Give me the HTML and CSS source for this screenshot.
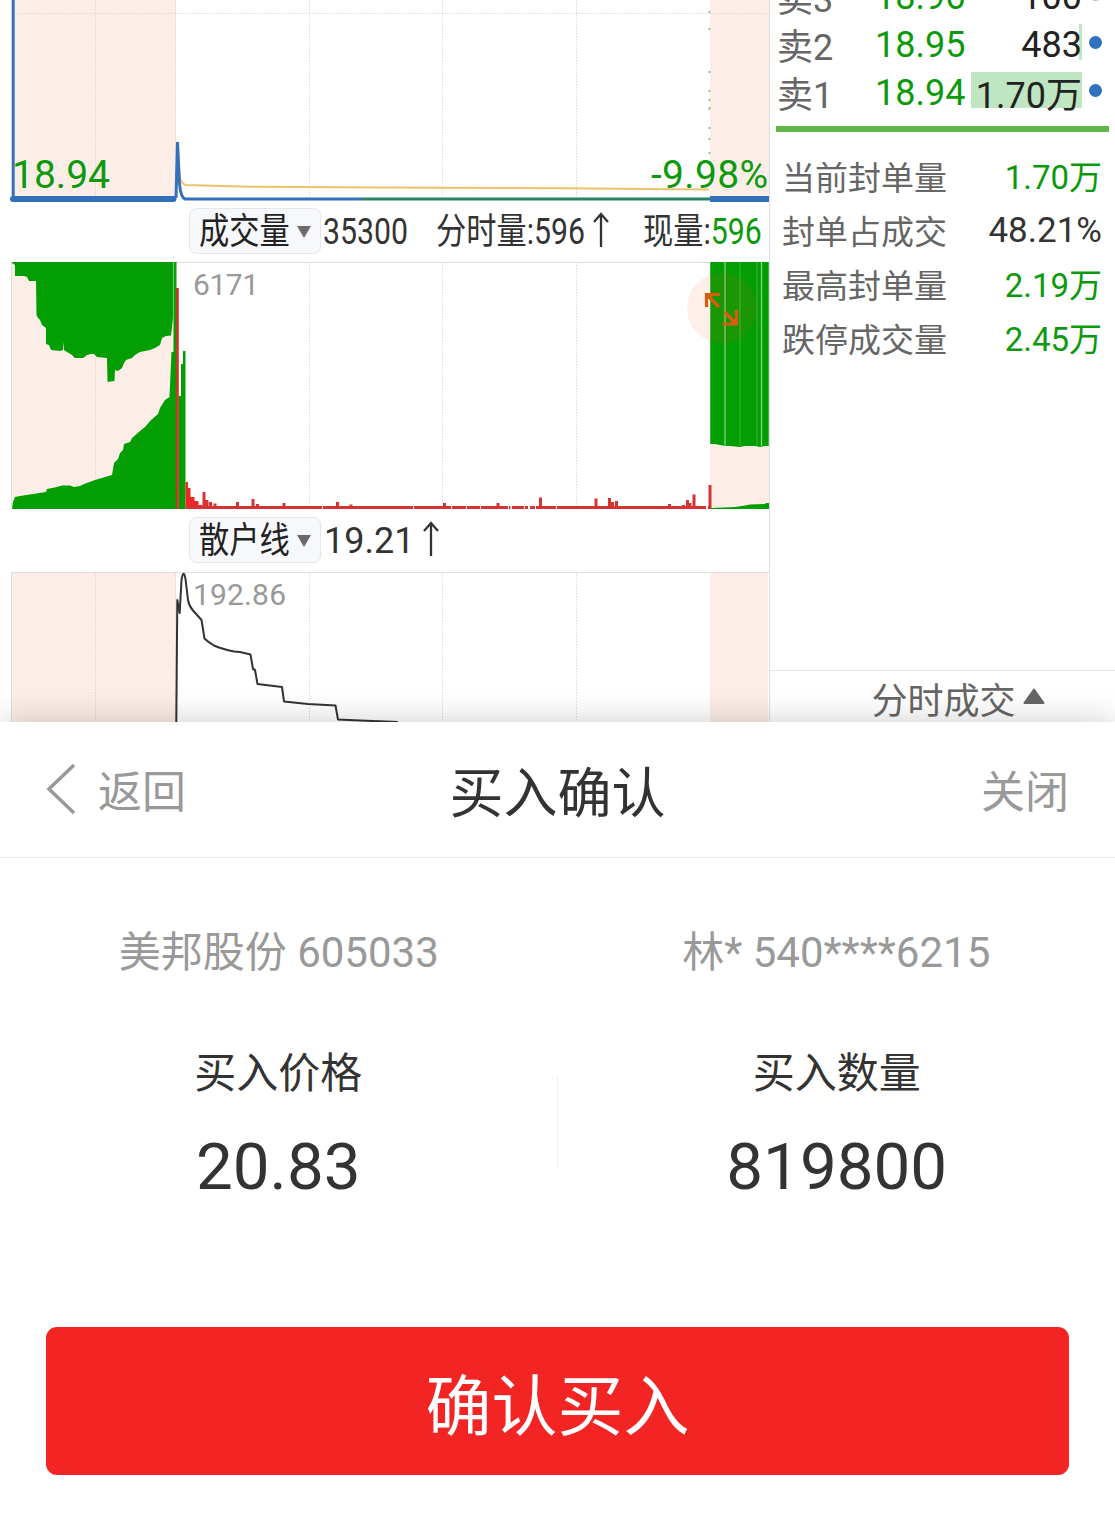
FILE: index.html
```html
<!DOCTYPE html>
<html lang="zh-CN">
<head>
  <meta charset="UTF-8" />
  <meta name="viewport" content="width=device-width, initial-scale=1.0"/>
  <title>买入确认</title>
  <link rel="stylesheet" href="styles.css">
</head>
<body>
  <div class="market">
    <div class="charts">
      <svg class="chart" width="769" height="204" viewBox="0 0 769 204">
        <rect class="auction" x="12" y="0" width="164" height="200"/>
        <rect class="auction" x="710" y="0" width="59" height="200"/>
        <path class="grid" d="M12 13.5H769M95.5 0V200M175.5 0V200M309.5 0V200M442.5 0V200M576.5 0V200"/>
        <path class="ticks" d="M709.5 11v2M709.5 28v2M709.5 71v2M709.5 90v2M709.5 99v2M709.5 107v3M709.5 127v2M709.5 138v2M709.5 152v2"/>
        <path class="avg" d="M179 168L180 178Q182 184.500 186 185L250 186.700L380 187.500L560 188.300L709 189.500"/>
        <path class="flat" d="M362 199H710"/>
        <path class="price" d="M13.200 0V198"/>
        <path class="price" d="M176 198L177.500 142L179.500 184Q181 198 185 199H362"/>
        <path class="limit" d="M13 199H173.500"/>
        <path class="limit square" d="M710 199H769"/>
        <text class="mark green" x="12" y="188" textLength="98">18.94</text>
        <text class="mark green" x="651" y="188" textLength="117">-9.98%</text>
      </svg>

      <div class="indicator">
        <div class="picker"><span class="narrow">成交量</span><i class="down"></i></div>
        <span class="total narrow">35300</span>
        <span class="minute"><span class="narrow">分时量:596</span></span>
        <svg class="arrow" width="18" height="36" viewBox="0 0 18 36"><path d="M9 35V2M2 10L9 2L16 10"/></svg>
        <span class="now narrow">现量:<b class="green">596</b></span>
      </div>

      <div class="pane">
        <svg class="chart" width="769" height="248" viewBox="0 262 769 248">
          <rect class="auction" x="12" y="262" width="164" height="247"/>
          <rect class="auction" x="710" y="262" width="59" height="247"/>
          <path class="grid" d="M95.500 262V509M309.500 262V509M442.500 262V509M576.500 262V509"/>
          <path class="frame" d="M11.500 509V262.500H769"/>
          <path class="fill" d="M12 262V263L15 265V276H24L27 277L29 281H36L36.500 315L38 318L40 320L42 325L46 328V344L49 345L51 350L60 351L63 350L63.300 342L64 350L67 352L72 355L75 358H83L87 355L91 354L94 354L97 357L107 358L107.500 382L114.500 381L115 370L118 371L122 368L124 363L126 360L132 358L135 355L140 352L150 350L155 348L160 345L162 338L166 336L171 335.500L173 318V262Z"/>
          <path class="fill" d="M12 509L13 502L15 497L20 496L46 492L47 489L57 487L62 485.500H70L74 487L80 486L84 484L95 480L112 475L114 463L118 459L120 453L123 450L124 444L130 442L132 438L140 431L145 427L150 421L158 414L160 408L165 400L169.500 397L171.500 352H173.500V262H176.500V509Z"/>
          <path class="fill" d="M178.500 396H181V364H183V351H185.500V509H178.500Z"/>
          <path class="peak" d="M177.300 288V509"/>
          <path class="sell" d="M185.500 509V482H188V488H190.500V497H194.500V501H198.500V505H202.500V509Z"/>
          <path class="base" d="M186 507.500H322M323 507.500H413M414 507.500H451M452 507.500H466M467 507.500H480M481 507.500H508M509 507.500H510.500M512 507.500H524M525 507.500H528M530 507.500H535M536 507.500H556M557 507.500H706M708 507.500H711"/>
          <path class="bars" d="M204 509V492M207 509V500M210.500 509V502M215 509V503.500M237.500 509V502M253 509V499M257.500 509V504M284 509V503M337.500 509V502M351 509V504.500M444.500 509V503M498 509V503M540.500 509V497.500M596 509V498.500M609.500 509V498M612.500 509V502M616.500 509V501M669.500 509V504M683.500 509V505M687.500 509V500M690 509V503M694 509V494.500M710 509V485"/>
          <path class="fill" d="M710 262H769V446H765L760 447L755 446L745 446L740 447L730 446L725 446L715 444H710Z"/>
          <path class="slit" d="M725 262V446M761.500 262V446"/>
          <path class="slit faint" d="M710.500 262V444M740 262V446M757 262V446M768.500 262V446"/>
          <path class="fill" d="M711 509V508L735 507L745 505.500L750 504.500L765 504L766 503H769V509Z"/>
          <text class="peak-label" x="193" y="295" textLength="66">6171</text>
        </svg>
        <button class="expand" aria-label="放大">
          <svg width="36" height="36" viewBox="0 0 36 36"><path d="M2.500 17V4.500H16M3 5L15 17M20.500 22L32 33.500M32.500 20V34H18.500"/></svg>
        </button>
      </div>

      <div class="indicator second">
        <div class="picker"><span class="narrow">散户线</span><i class="down"></i></div>
        <span class="retail">19.21</span>
        <svg class="arrow" width="18" height="36" viewBox="0 0 18 36"><path d="M9 35V2M2 10L9 2L16 10"/></svg>
      </div>

      <svg class="chart" width="769" height="150" viewBox="0 572 769 150">
        <rect class="auction" x="12" y="572" width="164" height="150"/>
        <rect class="auction" x="710" y="572" width="58" height="150"/>
        <path class="grid" d="M95.500 572V722M175.500 572V722M309.500 572V722M442.500 572V722M576.500 572V722"/>
        <path class="frame" d="M11.500 722V572.500H769"/>
        <path class="retail-line" d="M176.300 722L177.300 600L179.700 613L181.500 580Q183.500 568 185.500 579L188 600Q189 606 193 610.500L201.500 620L204.500 638.500Q208 642 214 645.500Q222 649 234 651.500L240 652L250.500 654.500L253 669L255 670L257.500 684L282 687L284 701.500L308 704L335.500 705.500L338 719.500L360 720.500L398 722"/>
        <text class="peak-label" x="193" y="605" textLength="93">192.86</text>
      </svg>
    </div>

    <div class="quotes">
      <div class="orders">
        <div class="order"><span class="side">卖3</span><span class="ask">18.96</span><span class="lots">100</span><i class="dot pale"></i></div>
        <div class="order"><span class="side">卖2</span><span class="ask">18.95</span><span class="lots thin">483</span><i class="dot"></i></div>
        <div class="order"><span class="side">卖1</span><span class="ask">18.94</span><span class="lots full">1.70万</span><i class="dot"></i></div>
      </div>
      <div class="stats">
        <div class="stat"><span>当前封单量</span><b class="green">1.70万</b></div>
        <div class="stat"><span>封单占成交</span><b class="percent">48.21%</b></div>
        <div class="stat"><span>最高封单量</span><b class="green">2.19万</b></div>
        <div class="stat"><span>跌停成交量</span><b class="green">2.45万</b></div>
      </div>
      <div class="trades">分时成交<svg width="22" height="17" viewBox="0 0 22 17"><path d="M11 1.500L20.500 15H1.500Z"/></svg></div>
    </div>
  </div>

  <div class="sheet">
    <div class="sheet-head">
      <div class="back">
        <svg width="30" height="52" viewBox="0 0 30 52"><path d="M28 2L3 26L28 50"/></svg>
        <span>返回</span>
      </div>
      <div class="title">买入确认</div>
      <div class="close">关闭</div>
    </div>
    <div class="account">
      <span>美邦股份 605033</span>
      <span>林* 540****6215</span>
    </div>
    <div class="amounts">
      <div class="amount">
        <div class="label">买入价格</div>
        <div class="number">20.83</div>
      </div>
      <div class="divider"></div>
      <div class="amount">
        <div class="label">买入数量</div>
        <div class="number">819800</div>
      </div>
    </div>
    <button class="confirm">确认买入</button>
  </div>
</body>
</html>
```

FILE: styles.css
```css
* {
  box-sizing: border-box;
}

body {
  margin: 0;
  height: 1535px;
  overflow: hidden;
  background: #fff;
  color: #333;
  font-family: Roboto, "Noto Sans CJK SC", sans-serif;
}

b {
  font-weight: normal;
}

button {
  border: 0;
  padding: 0;
  font-family: inherit;
}

.green {
  color: #0c9a0c;
  fill: #0c9a0c;
}

.market {
  display: flex;
  height: 722px;
  overflow: hidden;
}

/* charts */
.charts {
  width: 770px;
  border-right: 1px solid #dfdfe2;
}

.chart {
  display: block;
}

.chart path {
  fill: none;
}

.chart .auction {
  fill: #fceee7;
}

.chart .grid {
  stroke: #dcd8d8;
  stroke-dasharray: 1.5 1.5;
}

.chart .frame {
  stroke: #dedede;
}

.chart .ticks {
  stroke: #8fc88f;
  stroke-width: 2;
}

.chart .avg {
  stroke: #ecc36c;
  stroke-width: 2;
}

.chart .price {
  stroke: #3471ba;
  stroke-width: 3;
}

.chart .flat {
  stroke: #2b8068;
  stroke-width: 3;
}

.chart .limit {
  stroke: #3070bd;
  stroke-width: 6;
  stroke-linecap: round;
}

.chart .square {
  stroke-linecap: butt;
}

.chart .fill {
  fill: #039e03;
}

.chart .peak {
  stroke: #c23b27;
  stroke-width: 3;
}

.chart .sell {
  fill: #ee2727;
}

.chart .base,
.chart .bars {
  stroke: #d63333;
  stroke-width: 3;
}

.chart .slit {
  stroke: #8fd68f;
  stroke-width: 1.2;
}

.chart .faint {
  stroke: #3fb53f;
  stroke-width: 1;
}

.chart .retail-line {
  stroke: #333;
  stroke-width: 2;
  stroke-linejoin: round;
}

.mark {
  font-size: 39px;
}

.peak-label {
  font-size: 30px;
  fill: #999;
}

.indicator {
  display: flex;
  height: 58px;
  padding: 4px 0 0 189px;
  font-size: 36px;
  line-height: 48px;
  white-space: nowrap;
}

.indicator > * {
  flex-shrink: 0;
}

.indicator.second {
  height: 62px;
  padding-top: 7px;
}

.narrow {
  display: inline-block;
  transform: scaleX(0.84);
  transform-origin: left;
}

.picker {
  display: flex;
  align-items: center;
  width: 132px;
  height: 46px;
  padding: 1px 0 0 9px;
  border: 1px solid #e6e7ea;
  border-radius: 7px;
  background: #f7f8fb;
  color: #222;
}

.picker .narrow {
  width: 98px;
}

.down {
  border: 7.5px solid transparent;
  border-top: 12px solid #6b6b6b;
  border-bottom: 0;
}

.total {
  width: 113px;
  margin-left: 2px;
}

.minute {
  width: 156px;
}

.indicator .arrow {
  margin-top: 4px;
  fill: none;
  stroke: #333;
  stroke-width: 2.3;
}

.now {
  width: 145px;
  margin-left: 33px;
}

.retail {
  width: 98px;
  margin-left: 3px;
}

.pane {
  position: relative;
}

.expand {
  position: absolute;
  top: 11px;
  left: 687px;
  width: 70px;
  height: 70px;
  border-radius: 50%;
  background: rgba(242, 98, 40, 0.1);
}

.expand svg {
  display: block;
  margin: -1px 0 0 17px;
  fill: none;
  stroke: #dc5b0c;
  stroke-width: 3.2;
}

/* order book */
.quotes {
  display: flex;
  flex-direction: column;
  width: 345px;
}

.orders {
  height: 132px;
  margin: 0 6px;
  padding-right: 7px;
  border-bottom: 6px solid #60b748;
  font-size: 36px;
}

.order {
  display: flex;
  align-items: center;
  height: 48px;
  line-height: 48px;
}

.order:first-child {
  margin-top: -28px;
}

.side {
  width: 86px;
  padding: 7px 0 0 1px;
  color: #666;
}

.ask {
  width: 104px;
  padding: 2px 0 0 13px;
  color: #0c9a0c;
}

.lots {
  width: 116px;
  padding-top: 2px;
  color: #222;
  text-align: right;
}

.thin,
.full {
  height: 36px;
  margin-top: -4px;
  line-height: 38px;
}

.thin {
  background: linear-gradient(#bfe6c0, #bfe6c0) right / 3px 100% no-repeat;
}

.full {
  width: 111px;
  margin-left: 5px;
  background: #bfe6c0;
  line-height: 44px;
}

.dot {
  width: 13px;
  height: 13px;
  margin: -4px 0 0 7px;
  border-radius: 50%;
  background: #3070bd;
}

.pale {
  background: #bbb;
}

.stats {
  flex: 1;
  padding: 19px 13px 0 12px;
}

.stat {
  display: flex;
  justify-content: space-between;
  height: 54px;
  color: #666;
  font-size: 33px;
  line-height: 55px;
}

.stat .green {
  color: #0c9a0c;
  line-height: 53px;
}

.percent {
  color: #333;
  font-size: 35px;
  line-height: 51px;
}

.trades {
  display: flex;
  align-items: center;
  justify-content: center;
  gap: 7px;
  height: 52px;
  padding: 3px 0 0 31px;
  border-top: 1px solid #e4e4e4;
  color: #666;
  font-size: 36px;
}

.trades svg {
  margin-top: -4px;
  fill: #666;
  stroke: #666;
  stroke-width: 2;
  stroke-linejoin: round;
}

/* confirm sheet */
.sheet {
  position: relative;
  height: 813px;
  background: #fff;
  box-shadow: 0 0 32px rgba(0, 0, 0, 0.2);
}

.sheet-head {
  display: grid;
  grid-template-columns: 1fr auto 1fr;
  align-items: center;
  height: 136px;
  padding-bottom: 1px;
  border-bottom: 1px solid #ececec;
  padding-left: 46px;
  padding-right: 46px;
  color: #999;
  font-size: 44px;
}

.back {
  display: flex;
  align-items: center;
  gap: 22px;
}

.back svg {
  margin-top: -1px;
  fill: none;
  stroke: #999;
  stroke-width: 3.5;
}

.title {
  color: #333;
  font-size: 54px;
}

.close {
  text-align: right;
}

.account {
  display: grid;
  grid-template-columns: 1fr 1fr;
  padding-top: 63px;
  color: #999;
  font-size: 42px;
  line-height: 64px;
  text-align: center;
}

.amounts {
  display: flex;
  align-items: center;
  height: 182px;
  margin-top: 51px;
  text-align: center;
}

.amount {
  flex: 1;
}

.label {
  font-size: 42px;
  line-height: 80px;
}

.number {
  font-size: 65.5px;
  line-height: 106px;
}

.divider {
  width: 1px;
  height: 92px;
  margin: 0 1px 8px 0;
  background: #f0f0f0;
}

.confirm {
  display: block;
  width: 1023px;
  height: 148px;
  margin: 109px 0 0 46px;
  padding-bottom: 1px;
  border-radius: 11px;
  background: #f22424;
  color: #fff;
  font-size: 66px;
}
```
